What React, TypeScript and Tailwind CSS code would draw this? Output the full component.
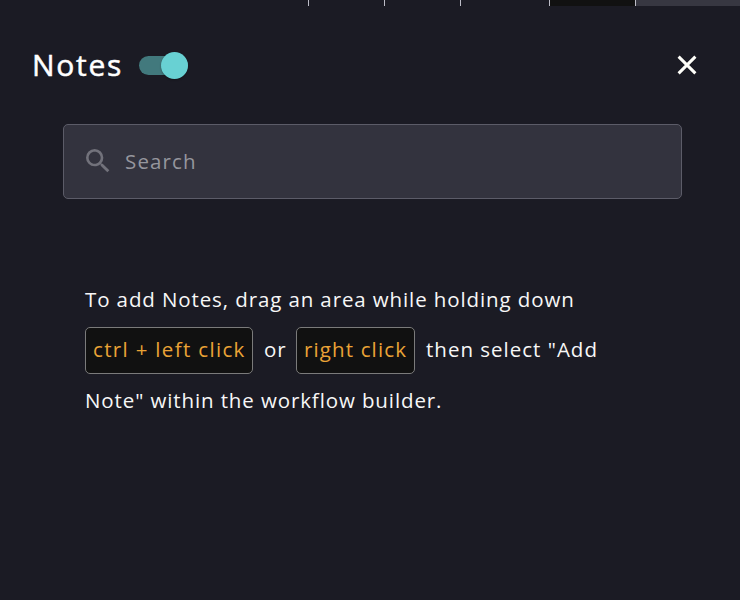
import React from "react";

function TopStrip() {
  return (
    <div className="flex h-[6px] w-full">
      <div className="w-[308px]" />
      <div className="w-[76px] border-l border-[#bdbdc7]" />
      <div className="w-[76px] border-l border-[#bdbdc7]" />
      <div className="w-[89px] border-l border-[#bdbdc7]" />
      <div className="w-[86px] border-l border-[#bdbdc7] bg-[#111111]" />
      <div className="flex-1 border-l border-[#bdbdc7] bg-[#373741]" />
    </div>
  );
}

function Toggle() {
  return (
    <button
      role="switch"
      aria-checked="true"
      aria-label="Toggle notes"
      className="flex h-[19px] w-[49px] items-center justify-end rounded-full bg-[#42797d]"
    >
      <span className="size-[27px] shrink-0 rounded-full bg-[#68d1d3] shadow-[0_1px_2px_rgba(0,0,0,0.3)]" />
    </button>
  );
}

function Key({ className, children }: { className: string; children: React.ReactNode }) {
  return (
    <kbd
      className={`flex h-[47px] items-center rounded-[5px] border border-[#7b7b7b] bg-[#111111] pb-[2px] pl-[7px] font-['Open_Sans',sans-serif] whitespace-nowrap text-[#eaa336] ${className}`}
    >
      {children}
    </kbd>
  );
}

export default function App() {
  return (
    <div className="flex h-[600px] w-[740px] flex-col overflow-hidden bg-[#1b1b24] font-['Open_Sans',sans-serif] text-[#f7f7f7]">
      <TopStrip />
      <header className="mt-[35px] flex h-12 items-center pr-[43px] pl-8">
        <h1 className="w-[107px] text-[30px] leading-[48px] font-medium tracking-[1.7px] whitespace-nowrap text-white [-webkit-text-stroke:0.5px_white]">Notes</h1>
        <Toggle />
        <button aria-label="Close" className="ml-auto size-[20px]">
          <svg viewBox="0 0 20 20" className="block size-[20px]" fill="none" stroke="#fffffa" strokeWidth="3">
            <path d="M1.6 1.6 18.4 18.4M18.4 1.6 1.6 18.4" />
          </svg>
        </button>
      </header>
      <div className="mt-[35px] ml-[63px] flex h-[75px] w-[619px] items-center rounded-[5px] border border-[#5c5c68] bg-[#33333e] pl-[18px]">
        <svg viewBox="0 0 24 24" className="-mt-[2px] size-[32px] shrink-0" fill="#72727b">
          <path d="M15.5 14h-.79l-.28-.27A6.471 6.471 0 0 0 16 9.5 6.5 6.5 0 1 0 9.5 16c1.61 0 3.09-.59 4.23-1.57l.27.28v.79l5 4.99L20.49 19l-4.99-5zm-6 0C7.01 14 5 11.99 5 9.5S7.01 5 9.5 5 14 7.01 14 9.5 11.99 14 9.5 14z" />
        </svg>
        <span className="ml-[11px] text-[20.5px] tracking-[1.15px] text-[#96969d]">Search</span>
      </div>
      <div className="mt-[76px] ml-[85px] text-[20.5px] tracking-[0.89px] whitespace-nowrap">
        <p className="h-[50px] leading-[48px]">To add Notes, drag an area while holding down</p>
        <div className="flex h-[51px] items-center">
          <Key className="w-[168px] tracking-[1.33px]">ctrl + left click</Key>
          <span className="ml-[11px] w-[32px] pb-[2px]">or</span>
          <Key className="w-[119px] tracking-[1.13px]">right click</Key>
          <span className="ml-[11px] pb-[2px] tracking-[1px]">then select "Add</span>
        </div>
        <p className="h-[50px] leading-[48px]">Note" within the workflow builder.</p>
      </div>
    </div>
  );
}
